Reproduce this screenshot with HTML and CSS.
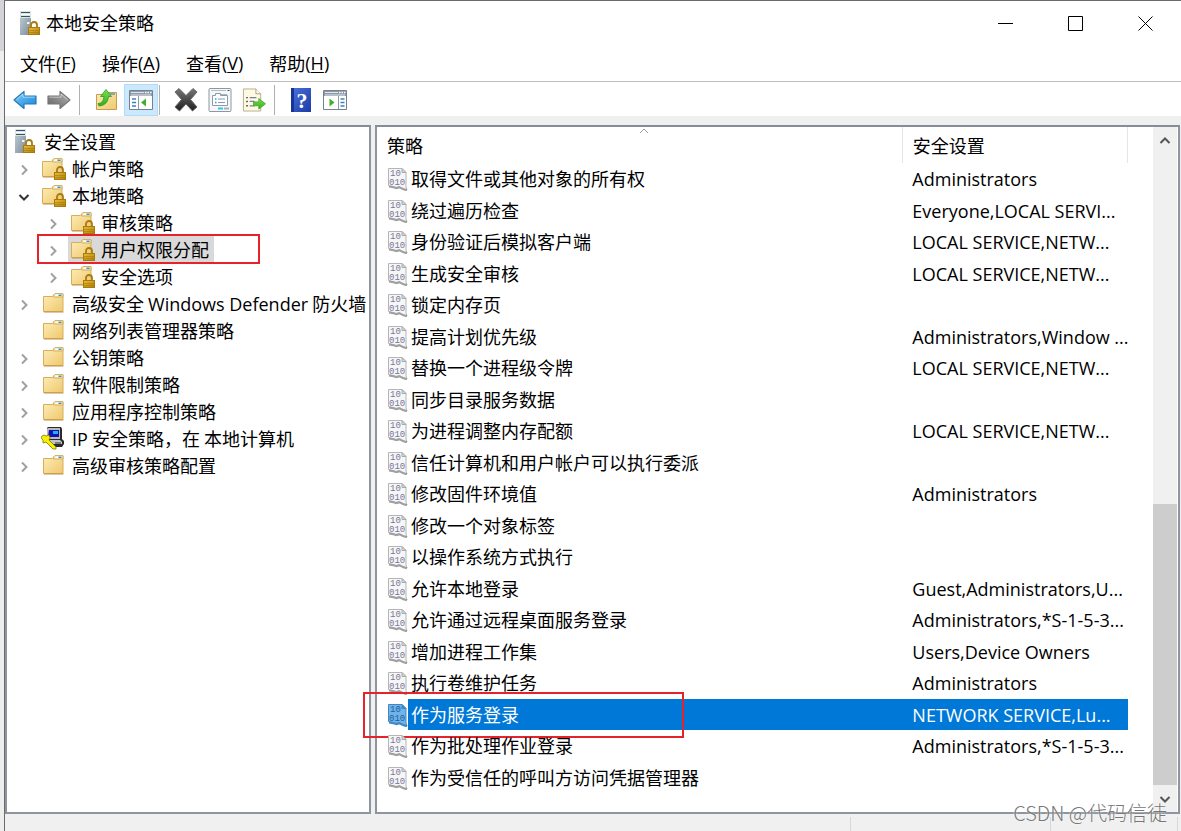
FILE: index.html
```html
<!DOCTYPE html>
<html lang="zh-CN">
<head>
    <meta charset="UTF-8">
    <meta name="viewport" content="width=device-width, initial-scale=1.0">
    <title>本地安全策略</title>
    <link rel="stylesheet" href="styles.css">
</head>
<body>
    <!-- icons -->
    <svg class="sprite" aria-hidden="true">
        <defs>
            <linearGradient id="g-folder" x1="0" y1="0" x2="1" y2="1">
                <stop offset="0" stop-color="#fdedb8"/><stop offset="1" stop-color="#efc86c"/>
            </linearGradient>
            <linearGradient id="g-lock" x1="0" y1="0" x2="1" y2="1">
                <stop offset="0" stop-color="#e8bf3c"/><stop offset="1" stop-color="#b07d08"/>
            </linearGradient>
            <linearGradient id="g-server" x1="0" y1="0" x2="1" y2="1">
                <stop offset="0" stop-color="#c3d0d8"/><stop offset="1" stop-color="#7b8b96"/>
            </linearGradient>
            <linearGradient id="g-blue" x1="0" y1="0" x2="1" y2="1">
                <stop offset="0" stop-color="#7ad0fb"/><stop offset="1" stop-color="#1583d8"/>
            </linearGradient>
            <linearGradient id="g-gray" x1="0" y1="0" x2="1" y2="1">
                <stop offset="0" stop-color="#b5b5b5"/><stop offset="1" stop-color="#626262"/>
            </linearGradient>
            <linearGradient id="g-dark" x1="0" y1="0" x2="0" y2="1">
                <stop offset="0" stop-color="#777"/><stop offset="1" stop-color="#1e1e1e"/>
            </linearGradient>
            <linearGradient id="g-help" x1="0" y1="0" x2="1" y2="1">
                <stop offset="0" stop-color="#4a74d8"/><stop offset="1" stop-color="#1c3aa8"/>
            </linearGradient>
            <linearGradient id="g-green" x1="0" y1="0" x2="0" y2="1">
                <stop offset="0" stop-color="#7be04e"/><stop offset="1" stop-color="#31ad1d"/>
            </linearGradient>
        </defs>
        <symbol id="lock" viewBox="0 0 12 14">
            <path d="M3 7V4a3 3 0 0 1 6 0v3" fill="none" stroke="#a87a12" stroke-width="1.8"/>
            <rect x="0.5" y="6.5" width="11" height="7" fill="url(#g-lock)" stroke="#a87b0a"/>
            <path d="M1 9.5h10M1 11.5h10" stroke="#a8780c" stroke-width=".6"/>
        </symbol>
        <symbol id="server" viewBox="0 0 22 24">
            <path d="M1 0h11v24H1z" fill="url(#g-server)"/>
            <path d="M1 0h11v7H1z" fill="#d9e3e8"/>
            <path d="M2 1.5h9M2 5.5h9" stroke="#37545f" stroke-width="1.2"/>
            <path d="M2 3.5h9" stroke="#fff"/>
            <path d="M8 11h2.500v2H8z" fill="#eef5f8"/>
            <use href="#lock" x="9" y="10" width="12" height="14"/>
        </symbol>
        <symbol id="folder" viewBox="0 0 26 24">
            <path d="M2.500 5.500h9l2-2.500h8.500v17.500h-19.500z" fill="url(#g-folder)" stroke="#d9ae58"/>
            <path d="M13 3.500l1-1h8v3.500h-9.500z" fill="#f8e9b8" stroke="#cda658" stroke-width=".8"/>
            <path d="M14.500 4.300h3" stroke="#fff" stroke-width="1.400"/>
            <path d="M17.500 4.300h3" stroke="#2f97d8" stroke-width="1.400"/>
            <path d="M3 21h19.500" stroke="#bf924a"/>
        </symbol>
        <symbol id="folder-lock" viewBox="0 0 26 24">
            <use href="#folder" x="-1" y="0" width="26" height="24"/>
            <use href="#lock" x="13" y="10" width="12" height="14"/>
        </symbol>
        <symbol id="ipsec" viewBox="0 0 26 24">
            <path d="M7 1h13l1 2v10l2 2v3l-2 3H9l-1-4-2-2V2z" fill="#2a2a2a"/>
            <path d="M7 2h12v11H6V3z" fill="#b9b9b9"/>
            <path d="M8 4h10v7H7z" fill="#1010b8"/>
            <path d="M12 5h5v3h-5z" fill="#20b0f0"/>
            <path d="M8 14h11l2 2v2H9z" fill="#c4c4c4"/>
            <path d="M14 17h6" stroke="#333"/>
            <path d="M1 10l2-1 2 1 3-1 1 3-1 2 7 7v2h-3l-7-7-3 1v-3l-2-2z" fill="#f8f000" stroke="#807800" stroke-width=".8"/>
        </symbol>
        <symbol id="policy" viewBox="0 0 22 24">
            <path d="M1.500 1.500h13.500l4 4v14.500l1 3-4-1.500-4-2-3 1-3-1-4.500-1z" class="paper"/>
            <path d="M15 1.500v4h4z" class="paper-fold"/>
            <path d="M2 19.500l4.500.8 3 1 3-1 4 2 3.500 1" class="paper-edge"/>
        </symbol>
        <symbol id="arrow" viewBox="0 0 24 20">
            <path d="M1 10L11 1.500v4.500h12v8H11v4.500z" stroke-linejoin="round" stroke-width="1.200"/>
            <path d="M3.500 9.500L10 4v3.200h11.800" fill="none" stroke="#fff" stroke-opacity=".5"/>
        </symbol>
        <symbol id="up" viewBox="0 0 24 24">
            <path d="M2.500 6.500h9l2-2h9v17h-20z" fill="url(#g-folder)" stroke="#c89c4c"/>
            <path d="M16 6h5" stroke="#3c9ad0" stroke-width="1.400"/>
            <path d="M4 15.500c4 0 5.500-3 6-7H6.500L12 1.500l5.500 7h-3C14 14 11 17.500 5 18z" fill="url(#g-green)" stroke="#2b9a22" stroke-width=".8"/>
        </symbol>
        <symbol id="pane" viewBox="0 0 24 20">
            <path d="M.5.5h23v19H.5z" fill="#fff" stroke="#77818c"/>
            <path d="M1 1h22v5H1z" fill="#8d9aa8"/>
            <path d="M2 2.500h13M2 5h20" stroke="#dfe5ea"/>
            <path d="M16 2.500h1.500M18.500 2.500H20M21 2.500h1.500" stroke="#fff" stroke-width="1.500"/>
        </symbol>
        <symbol id="show-tree" viewBox="0 0 24 20">
            <use href="#pane" width="24" height="20"/>
            <path d="M9.500 6v13" stroke="#8d9aa8"/>
            <path d="M3 9h4M3 12.500h4M3 16h4" stroke="#3f7fc4" stroke-width="1.400"/>
            <path d="M17 8.500v8L12 12.500z" fill="#3fb02c"/>
        </symbol>
        <symbol id="show-action" viewBox="0 0 24 20">
            <use href="#pane" width="24" height="20"/>
            <path d="M15.500 6v13" stroke="#8d9aa8"/>
            <path d="M17.500 9h4M17.500 12.500h4M17.500 16h4" stroke="#3f7fc4" stroke-width="1.400"/>
            <path d="M6.500 8.500v8l5-4z" fill="#3fb02c"/>
        </symbol>
        <symbol id="delete" viewBox="0 0 24 24">
            <path d="M1 4l4-3.500 7 7 7-7L23 4l-6.500 7.500L23 19l-4.500 4-6.500-7-6.500 7L1 19l6.500-7.500z" fill="url(#g-dark)" stroke="#666" stroke-linejoin="round"/>
        </symbol>
        <symbol id="properties" viewBox="0 0 24 24">
            <rect x="1" y=".5" width="22" height="23" rx="1" fill="#f5f7f8" stroke="#8c979f"/>
            <path d="M3 2.500h15" stroke="#b3bcc3"/><path d="M19.500 2.500h2" stroke="#444"/>
            <path d="M4.500 7.500h3v-2h5v2h7v10h-15z" fill="#fff" stroke="#8d99a8"/>
            <path d="M13 6.500h6" stroke="#a8b3c0"/>
            <path d="M7 11h1.500M7 14.500h1.500" stroke="#20a8d8" stroke-width="1.500"/>
            <path d="M10 11h7M10 14.500h7" stroke="#8a98ad"/>
            <path d="M10 20.500h5" stroke="#35c4ee" stroke-width="2"/><path d="M16 20.500h5" stroke="#a8b1b8" stroke-width="2"/>
        </symbol>
        <symbol id="export" viewBox="0 0 25 24">
            <path d="M1.500.5h13l5 5v18h-18z" fill="#fdf9e4" stroke="#b9ac88"/>
            <path d="M14.500.5v5h5" fill="#fff" stroke="#a99f84"/>
            <path d="M4.500 9.500H6M4.500 13.500H6M4.500 18H6" stroke="#333" stroke-width="1.500"/>
            <path d="M8 9.500h7M8 13.500h5M8 18h5" stroke="#817c9a" stroke-width="1.300"/>
            <path d="M12 14h5.500v-3.500l7 5.500-7 5.500V18H12z" fill="url(#g-green)" stroke="#3da128" stroke-width=".8"/>
        </symbol>
        <symbol id="chevron" viewBox="0 0 12 12">
            <path d="M4 1.500L8.500 6 4 10.500" fill="none" stroke="currentColor" stroke-width="2"/>
        </symbol>
    </svg>

    <div class="window">
        <header class="title-bar">
            <svg class="title-icon"><use href="#server"/></svg>
            <h1>本地安全策略</h1>
            <div class="window-buttons">
                <button type="button" aria-label="最小化"><svg viewBox="0 0 16 16"><path d="M0 8.500h15"/></svg></button>
                <button type="button" aria-label="最大化"><svg viewBox="0 0 16 16"><path d="M.5 1.500h14v14H.5z"/></svg></button>
                <button type="button" aria-label="关闭"><svg viewBox="0 0 16 16"><path d="M.5 1.500l14 14M14.500 1.500l-14 14"/></svg></button>
            </div>
        </header>

        <nav class="menu-bar">
            <button type="button">文件<span class="latin">(<u>F</u>)</span></button>
            <button type="button">操作<span class="latin">(<u>A</u>)</span></button>
            <button type="button">查看<span class="latin">(<u>V</u>)</span></button>
            <button type="button">帮助<span class="latin">(<u>H</u>)</span></button>
        </nav>

        <div class="tool-bar">
            <button type="button" aria-label="后退"><svg class="back"><use href="#arrow"/></svg></button>
            <button type="button" aria-label="前进"><svg class="forward"><use href="#arrow"/></svg></button>
            <span class="separator"></span>
            <button type="button" aria-label="向上一级"><svg><use href="#up"/></svg></button>
            <button type="button" class="active" aria-label="显示/隐藏控制台树"><svg><use href="#show-tree"/></svg></button>
            <span class="separator tight"></span>
            <button type="button" aria-label="删除"><svg><use href="#delete"/></svg></button>
            <button type="button" aria-label="属性"><svg><use href="#properties"/></svg></button>
            <button type="button" aria-label="导出列表"><svg><use href="#export"/></svg></button>
            <span class="separator"></span>
            <button type="button" aria-label="帮助">
                <svg viewBox="0 0 24 24">
                    <path d="M2 0h20v24H2z" fill="url(#g-help)"/>
                    <path d="M2 0h3v24H2z" fill="#17339a"/>
                    <text x="13" y="20" text-anchor="middle" class="help-mark">?</text>
                </svg>
            </button>
            <button type="button" aria-label="显示/隐藏操作窗格"><svg><use href="#show-action"/></svg></button>
        </div>

        <main class="panes">
            <section class="tree">
                <div class="node root">
                    <svg class="node-icon"><use href="#server"/></svg>安全设置
                </div>
                <ul>
                    <li>
                        <div class="node"><button type="button" class="toggle" aria-label="展开"><svg><use href="#chevron"/></svg></button><span class="label"><svg class="node-icon"><use href="#folder-lock"/></svg>帐户策略</span></div>
                    </li>
                    <li>
                        <div class="node"><button type="button" class="toggle open" aria-label="折叠"><svg><use href="#chevron"/></svg></button><span class="label"><svg class="node-icon"><use href="#folder-lock"/></svg>本地策略</span></div>
                        <ul>
                            <li>
                                <div class="node"><button type="button" class="toggle" aria-label="展开"><svg><use href="#chevron"/></svg></button><span class="label"><svg class="node-icon"><use href="#folder-lock"/></svg>审核策略</span></div>
                            </li>
                            <li>
                                <div class="node marked"><button type="button" class="toggle" aria-label="展开"><svg><use href="#chevron"/></svg></button><span class="label current"><svg class="node-icon"><use href="#folder-lock"/></svg>用户权限分配</span></div>
                            </li>
                            <li>
                                <div class="node"><button type="button" class="toggle" aria-label="展开"><svg><use href="#chevron"/></svg></button><span class="label"><svg class="node-icon"><use href="#folder-lock"/></svg>安全选项</span></div>
                            </li>
                        </ul>
                    </li>
                    <li>
                        <div class="node"><button type="button" class="toggle" aria-label="展开"><svg><use href="#chevron"/></svg></button><span class="label"><svg class="node-icon"><use href="#folder"/></svg><span>高级安全 <span class="latin">Windows Defender</span> 防火墙</span></span></div>
                    </li>
                    <li>
                        <div class="node leaf"><span class="label"><svg class="node-icon"><use href="#folder"/></svg>网络列表管理器策略</span></div>
                    </li>
                    <li>
                        <div class="node"><button type="button" class="toggle" aria-label="展开"><svg><use href="#chevron"/></svg></button><span class="label"><svg class="node-icon"><use href="#folder"/></svg>公钥策略</span></div>
                    </li>
                    <li>
                        <div class="node"><button type="button" class="toggle" aria-label="展开"><svg><use href="#chevron"/></svg></button><span class="label"><svg class="node-icon"><use href="#folder"/></svg>软件限制策略</span></div>
                    </li>
                    <li>
                        <div class="node"><button type="button" class="toggle" aria-label="展开"><svg><use href="#chevron"/></svg></button><span class="label"><svg class="node-icon"><use href="#folder"/></svg>应用程序控制策略</span></div>
                    </li>
                    <li>
                        <div class="node"><button type="button" class="toggle" aria-label="展开"><svg><use href="#chevron"/></svg></button><span class="label"><svg class="node-icon"><use href="#ipsec"/></svg><span><span class="latin">IP</span> 安全策略，在 本地计算机</span></span></div>
                    </li>
                    <li>
                        <div class="node"><button type="button" class="toggle" aria-label="展开"><svg><use href="#chevron"/></svg></button><span class="label"><svg class="node-icon"><use href="#folder"/></svg>高级审核策略配置</span></div>
                    </li>
                </ul>
            </section>

            <section class="list">
                <div class="list-body">
                    <table>
                        <thead>
                            <tr>
                                <th class="col-name">策略<svg class="sort" viewBox="0 0 10 6"><path d="M1 5l4-4 4 4"/></svg></th>
                                <th class="col-value">安全设置</th>
                            </tr>
                        </thead>
                        <tbody class="policies"></tbody>
                    </table>
                </div>
                <div class="scrollbar">
                    <button type="button" class="scroll-up" aria-label="向上滚动"><svg><use href="#chevron"/></svg></button>
                    <div class="thumb"></div>
                    <button type="button" class="scroll-down" aria-label="向下滚动"><svg><use href="#chevron"/></svg></button>
                </div>
            </section>
        </main>

        <footer class="status-bar">
            <span></span><span></span><span></span>
        </footer>
    </div>
    <div class="watermark">CSDN @代码信徒</div>

    <script>
        const policies = [
            ['取得文件或其他对象的所有权', 'Administrators'],
            ['绕过遍历检查', 'Everyone,LOCAL SERVI...'],
            ['身份验证后模拟客户端', 'LOCAL SERVICE,NETW...'],
            ['生成安全审核', 'LOCAL SERVICE,NETW...'],
            ['锁定内存页', ''],
            ['提高计划优先级', 'Administrators,Window ...'],
            ['替换一个进程级令牌', 'LOCAL SERVICE,NETW...'],
            ['同步目录服务数据', ''],
            ['为进程调整内存配额', 'LOCAL SERVICE,NETW...'],
            ['信任计算机和用户帐户可以执行委派', ''],
            ['修改固件环境值', 'Administrators'],
            ['修改一个对象标签', ''],
            ['以操作系统方式执行', ''],
            ['允许本地登录', 'Guest,Administrators,U...'],
            ['允许通过远程桌面服务登录', 'Administrators,*S-1-5-3...'],
            ['增加进程工作集', 'Users,Device Owners'],
            ['执行卷维护任务', 'Administrators'],
            ['作为服务登录', 'NETWORK SERVICE,Lu...'],
            ['作为批处理作业登录', 'Administrators,*S-1-5-3...'],
            ['作为受信任的呼叫方访问凭据管理器', '']
        ]
        const selected = '作为服务登录'

        const tbody = document.querySelector('.policies')
        policies.forEach(([name, value]) => {
            const row = document.createElement('tr')
            if(name == selected){
                row.classList.add('selected')
            }
            row.innerHTML = `
                <td><div class="policy">
                    <svg class="policy-icon" viewBox="0 0 22 24"><use href="#policy"/><text x="3" y="9" class="bits">10</text><text x="2" y="18" class="bits">010</text></svg>
                    <span class="policy-name">${name}</span>
                </div></td>
                <td class="value latin">${value}</td>`
            tbody.append(row)
        })
    </script>
</body>
</html>
```
FILE: styles.css
```css
*, *::after{
    box-sizing: border-box;
}
body{
    margin: 0;
    background: linear-gradient(#d3d4d8 51px, #eeeeee 51px);
    font-family: "Noto Sans CJK SC", sans-serif;
    font-size: 18px;
    color: #000;
}
button{
    display: flex;
    align-items: center;
    justify-content: center;
    padding: 0;
    border: 0;
    background: none;
    font: inherit;
    color: inherit;
}
ul{
    margin: 0;
    padding: 0;
    list-style: none;
}
.sprite{
    position: absolute;
    width: 0;
    height: 0;
}
.latin{
    font-family: "Open Sans", "Noto Sans CJK SC", sans-serif;
}
.window{
    display: flex;
    flex-direction: column;
    min-height: 100vh;
    margin-left: 4px;
    border-top: 1px solid #6b6b6b;
    border-left: 1px solid #6b6b6b;
    background-color: #f0f0f0;
}

/* title bar and menu */
.title-bar{
    display: flex;
    align-items: center;
    height: 44px;
    padding-left: 14px;
    background-color: #fff;
}
.title-icon{
    width: 22px;
    height: 24px;
    margin-right: 5px;
}
h1{
    margin: 0;
    padding-bottom: 2px;
    font-size: 18px;
    font-weight: 400;
}
.window-buttons{
    display: flex;
    margin-left: auto;
}
.window-buttons button{
    width: 70px;
    height: 44px;
}
.window-buttons svg{
    width: 16px;
    height: 16px;
    fill: none;
    stroke: #000;
}
.menu-bar{
    display: flex;
    height: 37px;
    padding-left: 2px;
    border-bottom: 1px solid #bdbdbd;
    background-color: #fff;
}
.menu-bar button{
    padding: 0 13px;
}
u{
    text-underline-offset: 2px;
}

/* tool bar */
.tool-bar{
    display: flex;
    align-items: center;
    height: 34px;
    padding: 2px 0 0 3px;
    background-color: #fff;
}
.tool-bar button{
    width: 34px;
    height: 32px;
}
.tool-bar .active{
    margin-left: 1px;
    background-color: #cce8ff;
    border: 1px solid #b3dcfb;
}
.tool-bar svg{
    width: 24px;
    height: 24px;
}
.tool-bar .back{
    fill: url(#g-blue);
    stroke: #2878b8;
}
.tool-bar .forward{
    fill: url(#g-gray);
    stroke: #777;
    transform: scaleX(-1);
}
.separator{
    width: 1px;
    height: 30px;
    margin: 0 9px 0 3px;
    background-color: #b0b0b0;
}
.separator.tight{
    margin-left: 1px;
}

/* panes */
.panes{
    flex: 1;
    display: grid;
    grid-template-columns: minmax(0, 5fr) minmax(0, 11fr);
    gap: 4px;
    padding: 9px 1px 0 0;
}
.tree, .list{
    border: 2px solid #8e959f;
    border-top-color: #868d98;
    background-color: #fff;
}
.tree{
    padding-left: 7px;
    white-space: nowrap;
}
.node{
    display: flex;
    align-items: center;
    height: 27px;
}
.node-icon{
    flex: none;
    width: 26px;
    height: 24px;
    margin-right: 5px;
}
.root .node-icon{
    width: 22px;
    margin-right: 8px;
}
.toggle{
    flex: none;
    width: 20px;
    height: 27px;
    margin-right: 5px;
    padding-top: 4px;
    color: #a0a0a0;
}
.toggle svg, .scrollbar svg{
    width: 12px;
    height: 12px;
}
.toggle.open{
    color: #333;
}
.toggle.open svg, .scroll-down svg{
    transform: rotate(90deg);
}
.label{
    display: flex;
    align-items: center;
    height: 26px;
    padding: 0 5px 0 2px;
}
.leaf{
    padding-left: 25px;
}
.current{
    background-color: #d9d9d9;
}
li li{
    padding-left: 29px;
}
.marked, .policy{
    position: relative;
}
.marked::after, .selected .policy::after{
    content: "";
    position: absolute;
    top: -1px;
    left: -6px;
    width: 223px;
    height: 30px;
    border: 2px solid #e5232b;
}

/* policy list */
.list{
    display: flex;
}
.list-body{
    flex: 1;
    padding-right: 25px;
}
table{
    width: 100%;
    table-layout: fixed;
    border-collapse: collapse;
}
th{
    height: 36px;
    padding: 0 0 0 10px;
    border-right: 1px solid #e5e5e5;
    font-weight: 400;
    text-align: left;
}
.col-name{
    position: relative;
    width: 70%;
}
.sort{
    position: absolute;
    top: 1px;
    left: 50%;
    width: 10px;
    height: 6px;
    fill: none;
    stroke: #999;
}
td{
    height: 31px;
    padding: 0;
    line-height: 24px;
    white-space: nowrap;
}
tr:nth-child(odd) td{
    height: 32px;
}
.value{
    padding-left: 10px;
}
.policy{
    display: flex;
    align-items: center;
    padding-left: 10px;
}
.policy-icon{
    width: 22px;
    height: 24px;
}
.paper{
    fill: var(--paper, #f6f6f6);
    stroke: var(--paper-line, #b5b5b5);
}
.paper-fold{
    fill: var(--paper-line, #d8d8d8);
    stroke: var(--paper-line, #aaa);
}
.paper-edge{
    fill: none;
    stroke: var(--paper-line, #a0a0a0);
    stroke-width: 2px;
}
.bits{
    font: 9px "Liberation Mono", monospace;
    fill: var(--bits, #77779a);
}
.help-mark{
    font: bold 22px "Liberation Serif", serif;
    fill: #fff;
}
.policy-name{
    flex: 1;
    padding: 2px 0 4px 2px;
}
.selected{
    color: #fff;
    --paper: #6fb3e8;
    --paper-line: #3c8acb;
    --bits: #1f5f9f;
}
.selected td{
    background: linear-gradient(90deg, #fff 31px, #0078d7 31px);
}
.selected .value{
    background: #0078d7;
}
.selected .policy::after{
    top: -8px;
    left: -14px;
    width: 321px;
    height: 46px;
}
.scrollbar{
    display: flex;
    flex-direction: column;
    width: 24px;
    margin-right: 1px;
    background-color: #f0f0f0;
    color: #555;
}
.scrollbar button{
    height: 27px;
}
.scroll-up svg{
    transform: rotate(-90deg);
}
.thumb{
    height: 41%;
    margin-top: auto;
    background-color: #cdcdcd;
}

/* status bar */
.status-bar{
    display: flex;
    justify-content: flex-end;
    height: 17px;
    padding: 3px 3px 0 0;
}
.status-bar span{
    width: 200px;
    border-right: 1px solid #d7d7d7;
}
.status-bar span:last-child{
    width: 127px;
}
.watermark{
    position: absolute;
    right: 14px;
    bottom: 3px;
    font-size: 20px;
    font-weight: 300;
    line-height: 30px;
    color: #777;
    text-shadow: 0 0 2px #fff;
}
```
